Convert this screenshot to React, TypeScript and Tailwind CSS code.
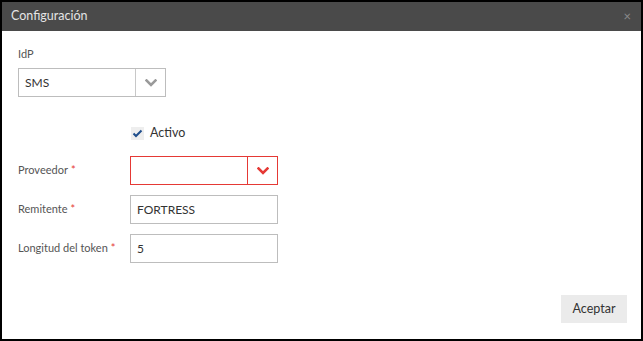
import { useState } from "react";

const Chevron = ({ color }: { color: string }) => (
  <svg width="12" height="8" viewBox="0 0 12 8" fill="none">
    <path d="M1.5 1.5 L6 6 L10.5 1.5" stroke={color} strokeWidth="2.6" strokeLinecap="square" />
  </svg>
);

const Req = () => <span className="text-[#e53935] ml-[3px]">*</span>;

export default function App() {
  const [activo, setActivo] = useState(true);

  return (
    <div
      className="w-[643px] h-[341px] bg-white border-2 border-black flex flex-col text-[11px] text-[#555]"
      style={{ fontFamily: "'Source Sans Pro', Lato, sans-serif" }}
    >
      <div className="h-[29px] bg-[#4a4a4a] flex items-center justify-between pl-[9px] pr-[10px] shrink-0">
        <span className="text-[12.5px] text-[#e4e4e4]">Configuración</span>
        <span className="text-[13px] text-[#8a8a8a] leading-none">×</span>
      </div>

      <div className="flex-1 flex flex-col pl-[16px] pr-[14px]">
        <div className="mt-[16px] leading-[14px]">IdP</div>
        <div className="mt-[7px] w-[148px] h-[29px] border border-[#bdbdbd] flex">
          <div className="flex-1 flex items-center pl-[6px] text-[12px] text-[#333]">SMS</div>
          <div className="w-[30px] border-l border-[#c8c8c8] flex items-center justify-center">
            <Chevron color="#9a9a9a" />
          </div>
        </div>

        <label className="mt-[27px] ml-[113px] flex items-center gap-[6px] cursor-pointer h-[18px]">
          <span
            onClick={() => setActivo(!activo)}
            className="w-[13px] h-[13px] bg-[#eeeeee] flex items-center justify-center"
          >
            {activo && (
              <svg width="11" height="9" viewBox="0 0 11 9" fill="none">
                <path d="M1.5 4.5 L4 7 L9.5 1.5" stroke="#1f4e8c" strokeWidth="2" />
              </svg>
            )}
          </span>
          <span className="text-[12.5px] text-[#333]">Activo</span>
        </label>

        <div className="mt-[14px] flex flex-col gap-[10px]">
          <div className="flex items-center">
            <div className="w-[112px]">
              Proveedor<Req />
            </div>
            <div className="w-[148px] h-[29px] border border-[#e53935] flex">
              <div className="flex-1" />
              <div className="w-[30px] border-l border-[#e53935] flex items-center justify-center">
                <Chevron color="#e53935" />
              </div>
            </div>
          </div>
          <div className="flex items-center">
            <div className="w-[112px]">
              Remitente<Req />
            </div>
            <div className="w-[148px] h-[29px] border border-[#bdbdbd] flex items-center pl-[6px] text-[12px] text-[#333]">
              FORTRESS
            </div>
          </div>
          <div className="flex items-center">
            <div className="w-[112px]">
              Longitud del token<Req />
            </div>
            <div className="w-[148px] h-[29px] border border-[#bdbdbd] flex items-center pl-[6px] text-[12px] text-[#333]">
              5
            </div>
          </div>
        </div>

        <div className="flex-1" />
        <div className="flex justify-end mb-[16px]">
          <button className="w-[66px] h-[28px] bg-[#ebebeb] text-[12.5px] text-[#333]">Aceptar</button>
        </div>
      </div>
    </div>
  );
}
